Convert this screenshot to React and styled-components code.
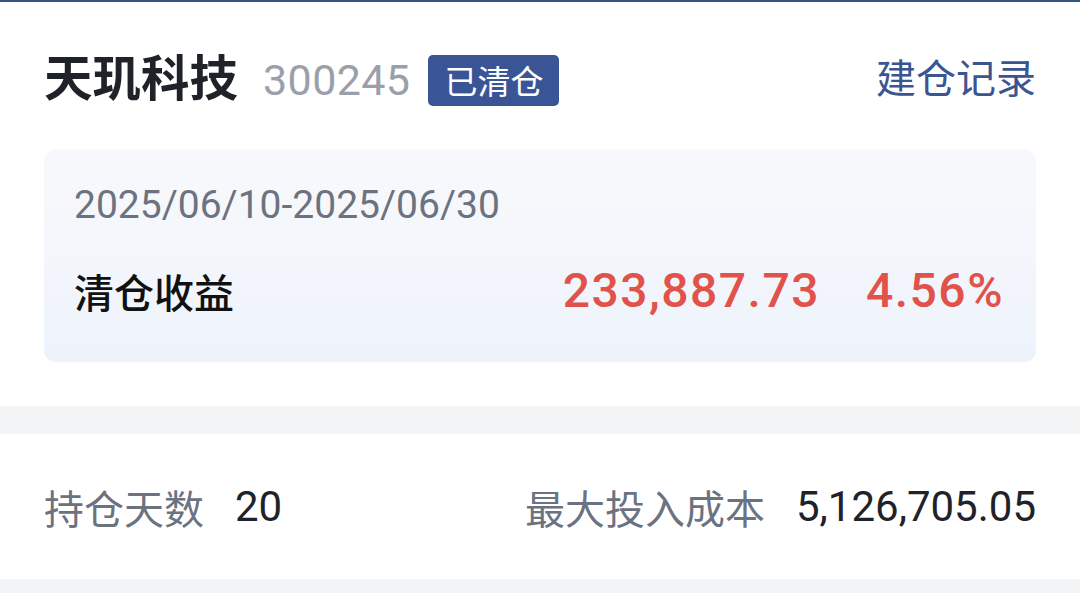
import styled, { createGlobalStyle } from "styled-components";

const GlobalStyle = createGlobalStyle`
  html, body {
    margin: 0;
    padding: 0;
    background: #f3f4f6;
  }
  body {
    font-family: "Roboto", "Noto Sans CJK SC", sans-serif;
  }
`;

export default function App() {
  return (
    <>
      <GlobalStyle />
      <Page>
        <Header>
          <TitleGroup>
            <StockName>天玑科技</StockName>
            <StockCode>300245</StockCode>
            <Badge>已清仓</Badge>
          </TitleGroup>
          <RecordLink>建仓记录</RecordLink>
        </Header>

        <SummaryCard>
          <DateRange>2025/06/10-2025/06/30</DateRange>
          <ProfitRow>
            <ProfitLabel>清仓收益</ProfitLabel>
            <ProfitValues>
              <RedNumber>233,887.73</RedNumber>
              <RedNumber>4.56%</RedNumber>
            </ProfitValues>
          </ProfitRow>
        </SummaryCard>
      </Page>

      <Spacer />

      <StatsRow>
        <Stat>
          <StatLabel>持仓天数</StatLabel>
          <StatValue>20</StatValue>
        </Stat>
        <Stat>
          <StatLabel>最大投入成本</StatLabel>
          <StatValue>5,126,705.05</StatValue>
        </Stat>
      </StatsRow>
    </>
  );
}

const Page = styled.div`
  background: #ffffff;
  border-top: 2px solid #3b5285;
  padding: 0 44px 44px;
`;

const Header = styled.div`
  display: flex;
  align-items: center;
  justify-content: space-between;
  height: 52px;
  margin-top: 52px;
`;

const TitleGroup = styled.div`
  display: flex;
  align-items: center;
`;

const StockName = styled.span`
  font-size: 48.5px;
  font-weight: 700;
  color: #1f2329;
  line-height: 1;
`;

const StockCode = styled.span`
  margin-left: 25px;
  font-size: 43px;
  letter-spacing: 0.4px;
  color: #9aa0a9;
  line-height: 1;
`;

const Badge = styled.span`
  margin-left: 18px;
  display: flex;
  align-items: center;
  height: 51px;
  padding: 0 16px;
  background: #3a5596;
  border-radius: 5px;
  color: #ffffff;
  font-size: 33px;
`;

const RecordLink = styled.span`
  font-size: 40px;
  color: #3a5590;
  line-height: 1;
`;

const SummaryCard = styled.div`
  margin-top: 43px;
  height: 213px;
  box-sizing: border-box;
  padding: 32px 32px 0 30px;
  border-radius: 12px;
  background: linear-gradient(180deg, #f8f9fc 0%, #eef3fb 100%);
`;

const DateRange = styled.div`
  font-size: 39px;
  color: #6b7280;
  line-height: 48px;
`;

const ProfitRow = styled.div`
  margin-top: 38px;
  display: flex;
  align-items: center;
  justify-content: space-between;
  height: 48px;
`;

const ProfitLabel = styled.span`
  font-size: 40px;
  font-weight: 500;
  color: #111111;
`;

const ProfitValues = styled.div`
  display: flex;
  gap: 46px;
`;

const RedNumber = styled.span`
  font-size: 48px;
  font-weight: 500;
  letter-spacing: 1.5px;
  color: #e0524a;
  line-height: 1;
`;

const Spacer = styled.div`
  height: 28px;
  background: #f3f4f6;
`;

const StatsRow = styled.div`
  height: 145px;
  background: #ffffff;
  padding: 0 44px;
  display: flex;
  align-items: center;
  justify-content: space-between;
`;

const Stat = styled.div`
  display: flex;
  align-items: center;
  gap: 31px;
`;

const StatLabel = styled.span`
  font-size: 40px;
  color: #6b7280;
`;

const StatValue = styled.span`
  font-size: 42px;
  color: #1f2329;
`;
